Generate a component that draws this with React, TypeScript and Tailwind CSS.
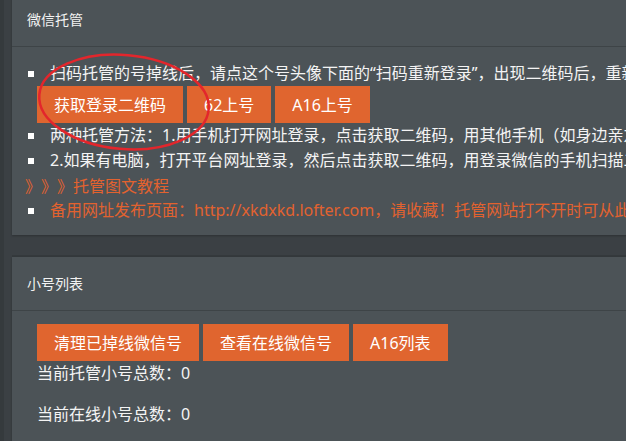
function Bullet() {
  return <span className="inline-block w-[6px] h-[6px] bg-white shrink-0" />;
}

function OrangeButton({ children }: { children: string }) {
  return (
    <button className="h-[37px] px-[17px] bg-[#e0652f] text-white text-[16px] leading-none whitespace-nowrap">
      {children}
    </button>
  );
}

function Panel({ title, children }: { title: string; children: React.ReactNode }) {
  return (
    <div className="w-[900px] bg-[#4c5357] shadow-[0_1px_2px_rgba(0,0,0,0.25)]">
      <div className="h-[54px] flex items-center px-[15px] border-b border-[#3e4447] text-[14px] text-[#f2f2f2]">
        {title}
      </div>
      {children}
    </div>
  );
}

export default function App() {
  return (
    <div className="h-[441px] overflow-hidden bg-[#3b4044] border-l-4 border-[#353a3d] font-['Noto_Sans','Noto_Sans_CJK_SC',sans-serif]">
      <div className="pl-2 mt-[-7px]">
        <div className="relative">
          <Panel title="微信托管">
            <div className="pt-[14px] pb-[12px] pl-[16px] text-[16px] leading-[25px] text-[#f4f4f4] whitespace-nowrap">
              <div className="flex items-center gap-4">
                <Bullet />
                <span>扫码托管的号掉线后，请点这个号头像下面的“扫码重新登录”，出现二维码后，重新扫码登录即可</span>
              </div>
              <div className="flex gap-1 pl-[9px]">
                <OrangeButton>获取登录二维码</OrangeButton>
                <OrangeButton>62上号</OrangeButton>
                <OrangeButton>A16上号</OrangeButton>
              </div>
              <div className="flex items-center gap-4">
                <Bullet />
                <span>两种托管方法：1.用手机打开网址登录，点击获取二维码，用其他手机（如身边亲友的手机）扫描二维码</span>
              </div>
              <div className="flex items-center gap-4">
                <Bullet />
                <span>2.如果有电脑，打开平台网址登录，然后点击获取二维码，用登录微信的手机扫描二维码即可</span>
              </div>
              <div className="ml-[-3px] text-[#e2622f] font-['Noto_Sans_CJK_SC',sans-serif] [text-spacing-trim:space-all]">》》》托管图文教程</div>
              <div className="flex items-center gap-4">
                <Bullet />
                <span className="text-[#e2622f]">备用网址发布页面：http://xkdxkd.lofter.com，请收藏！托管网站打不开时可从此网址获取最新地址</span>
              </div>
            </div>
          </Panel>
          <svg className="absolute left-0 top-0 pointer-events-none" width="280" height="200" viewBox="0 0 280 200">
            <ellipse cx="112" cy="109" rx="85" ry="47" fill="none" stroke="#e3262c" strokeWidth="2.5" transform="rotate(5 112 109)" />
          </svg>
        </div>
        <div className="mt-[20px] border-t-2 border-[#34393c]">
          <Panel title="小号列表">
            <div className="pt-[13px] pb-6 pl-[25px] text-[16px] leading-[25px] text-[#f4f4f4] whitespace-nowrap">
              <div className="flex gap-1">
                <OrangeButton>清理已掉线微信号</OrangeButton>
                <OrangeButton>查看在线微信号</OrangeButton>
                <OrangeButton>A16列表</OrangeButton>
              </div>
              <div>当前托管小号总数：0</div>
              <div className="mt-[16px]">当前在线小号总数：0</div>
            </div>
          </Panel>
        </div>
      </div>
    </div>
  );
}
